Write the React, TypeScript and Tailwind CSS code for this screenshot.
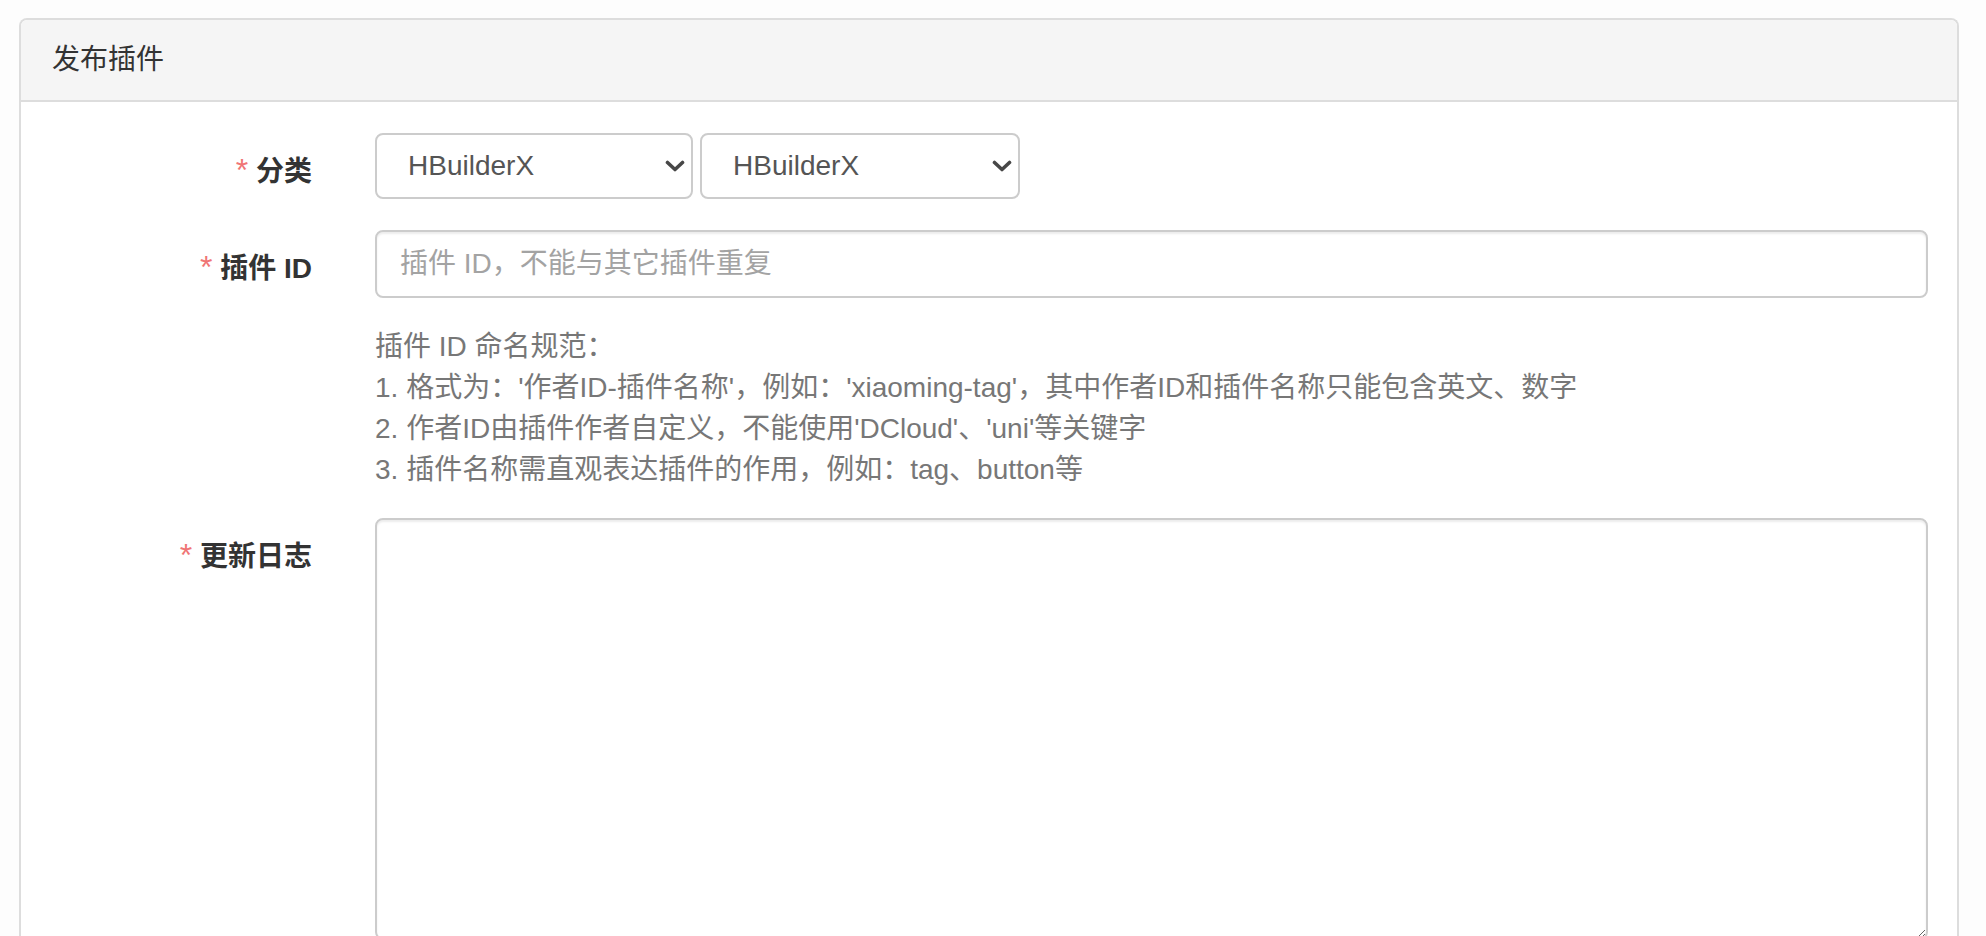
import React from "react";

function Chevron() {
  return (
    <svg
      className="pointer-events-none absolute right-[8px] top-1/2 -translate-y-1/2"
      width="20"
      height="12"
      viewBox="0 0 20 12"
      fill="none"
    >
      <path d="M2.5 2.5 L10 9.5 L17.5 2.5" stroke="#474747" strokeWidth="3.6" strokeLinecap="round" strokeLinejoin="round" />
    </svg>
  );
}

function Select({ w }: { w: string }) {
  return (
    <div className={`relative ${w}`}>
      <select
        defaultValue="HBuilderX"
        className="h-[66px] w-full appearance-none rounded-[8px] border-2 border-[#cccccc] bg-white pl-[31px] pr-[40px] text-[28px] text-[#555555] outline-none"
      >
        <option>HBuilderX</option>
      </select>
      <Chevron />
    </div>
  );
}

function Label({ text }: { text: string }) {
  return (
    <div className="w-[291px] shrink-0 pt-[19px] text-right text-[28px] font-bold leading-[40px] text-[#333333]">
      <span className="text-[32px] font-normal leading-[0] text-[#f07575]">*</span> {text}
    </div>
  );
}

export default function App() {
  return (
    <div className="min-h-screen bg-[#fdfdfd] pl-[19px] pr-[27px] pt-[18px] font-['Liberation_Sans','Noto_Sans_CJK_SC',sans-serif]">
      <div className="rounded-t-[8px] border-2 border-b-0 border-[#dddddd] bg-white">
        <div className="flex h-[82px] items-center rounded-t-[6px] border-b-2 border-[#dddddd] bg-[#f5f5f5] px-[31px] text-[28px] text-[#333333]">
          发布插件
        </div>
        <div className="pr-[29px] pt-[31px]">
          <div className="flex items-start">
            <Label text="分类" />
            <div className="ml-[63px] flex gap-[7px]">
              <Select w="w-[318px]" />
              <Select w="w-[320px]" />
            </div>
          </div>
          <div className="mt-[31px] flex items-start">
            <Label text="插件 ID" />
            <div className="ml-[63px] flex-1">
              <input
                placeholder="插件 ID，不能与其它插件重复"
                className="h-[68px] w-full rounded-[8px] border-2 border-[#cccccc] bg-white px-[23px] text-[28px] text-[#555555] shadow-[inset_0_2px_2px_rgba(0,0,0,0.075)] outline-none placeholder:text-[#a3a3a3]"
              />
            </div>
          </div>
          <div className="ml-[354px] mt-[28px] text-[28px] leading-[41px] text-[#777777]">
            <div>插件 ID 命名规范：</div>
            <div>1. 格式为：'作者ID-插件名称'，例如：'xiaoming-tag'，其中作者ID和插件名称只能包含英文、数字</div>
            <div>2. 作者ID由插件作者自定义，不能使用'DCloud'、'uni'等关键字</div>
            <div>3. 插件名称需直观表达插件的作用，例如：tag、button等</div>
          </div>
          <div className="mt-[28px] flex items-start">
            <Label text="更新日志" />
            <div className="ml-[63px] flex-1">
              <textarea className="block h-[422px] w-full rounded-[8px] border-2 border-[#cccccc] bg-white px-[23px] py-[12px] text-[28px] text-[#555555] shadow-[inset_0_2px_2px_rgba(0,0,0,0.075)] outline-none" />
            </div>
          </div>
          <div className="h-[40px]" />
        </div>
      </div>
    </div>
  );
}
